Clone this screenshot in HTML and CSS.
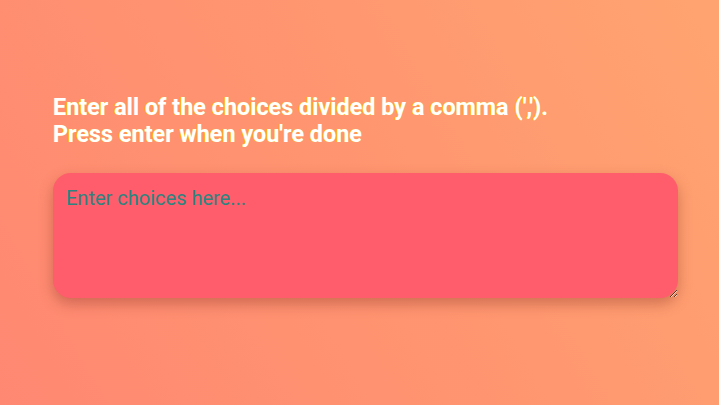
FILE: index.html
```html
<!DOCTYPE html>
<html lang="en">
<head>
<meta charset="utf-8">
<title>Choices</title>
<link rel="stylesheet" href="styles.css">
</head>
<body>
<main class="page">
  <h1 class="prompt">Enter all of the choices divided by a comma (',').<br>Press enter when you're done</h1>
  <textarea class="choices" placeholder="Enter choices here..."></textarea>
</main>
</body>
</html>
```
FILE: styles.css
```css
html, body {
  margin: 0;
  height: 100%;
}
body {
  background: linear-gradient(60deg, #ff8872 0%, #ff9670 55%, #ffa470 100%);
  font-family: Roboto, "Liberation Sans", sans-serif;
}
.page {
  padding: 94px 41px 0 53px;
  display: flex;
  flex-direction: column;
}
.prompt {
  margin: 0;
  font-size: 23.4px;
  font-weight: 700;
  line-height: 27px;
  color: #ffffff;
  text-shadow: -1px 0 0 #ffbf00;
}
.choices {
  margin-top: 25px;
  height: 125px;
  box-sizing: border-box;
  border: none;
  outline: none;
  border-radius: 18px;
  background: #ff5c6c;
  padding: 13px 13px;
  font-family: Roboto, "Liberation Sans", sans-serif;
  font-size: 20px;
  color: #1f8a86;
  box-shadow: 0 6px 14px rgba(120, 40, 30, 0.35);
  resize: both;
}
.choices::placeholder {
  color: #2b8580;
  opacity: 1;
}
```
